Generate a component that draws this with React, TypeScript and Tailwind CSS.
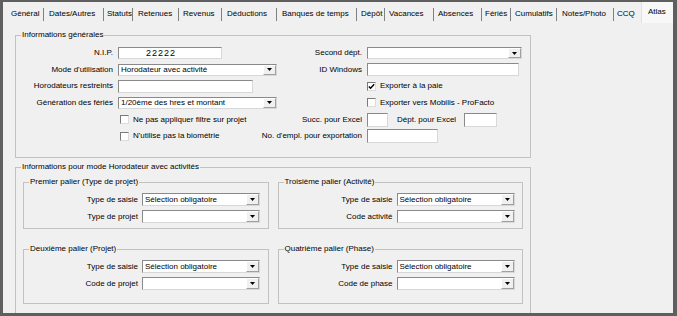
import React from 'react'

const tabs: [string, string][] = [
  ['Général', 'w-[40px] pl-[8px]'],
  ['Dates/Autres', 'w-[59px] pl-[5px]'],
  ['Statuts', 'w-[28px] pl-[3px]'],
  ['Retenues', 'w-[45px] pl-[5px]'],
  ['Revenus', 'w-[42px] pl-[4px]'],
  ['Déductions', 'w-[54px] pl-[5px]'],
  ['Banques de temps', 'w-[79px] pl-[5px]'],
  ['Dépôt', 'w-[27px] pl-[4px]'],
  ['Vacances', 'w-[48px] pl-[4px]'],
  ['Absences', 'w-[47px] pl-[4px]'],
  ['Fériés', 'w-[28px] pl-[3px]'],
  ['Cumulatifs', 'w-[45px] pl-[4px]'],
  ['Notes/Photo', 'w-[56px] pl-[5px]'],
]

// libellé aligné à droite, déborde vers la gauche si trop long
function Label({ w, children }: { w: string; children: React.ReactNode }) {
  return (
    <div className={`${w} shrink-0 flex justify-end`}>
      <span className="leading-[10px] whitespace-nowrap">{children}</span>
    </div>
  )
}

function Input({ w, h = 'h-[12px]', value, extra = '' }: { w: string; h?: string; value?: string; extra?: string }) {
  return (
    <div className={`${w} ${h} bg-white border border-t-[#8a8a8a] border-l-[#8a8a8a] border-r-[#d8d8d8] border-b-[#d8d8d8] flex items-center leading-[10px] ${extra}`}>
      {value}
    </div>
  )
}

function Combo({ w, h = 'h-[12px]', value }: { w: string; h?: string; value?: string }) {
  return (
    <div className={`${w} ${h} bg-white border border-t-[#8a8a8a] border-l-[#8a8a8a] border-r-[#d8d8d8] border-b-[#d8d8d8] flex items-stretch`}>
      <div className="flex-1 flex items-center pl-[2px] leading-[10px] whitespace-nowrap overflow-hidden">{value}</div>
      <div className="w-[13px] bg-[#f0f0f0] border border-t-white border-l-white border-r-[#a0a0a0] border-b-[#a0a0a0] flex items-center justify-center">
        <svg width="5" height="3" viewBox="0 0 5 3">
          <polygon points="0,0 5,0 2.5,3" fill="#000" />
        </svg>
      </div>
    </div>
  )
}

function Check({ checked, label }: { checked?: boolean; label: string }) {
  return (
    <div className="flex items-center">
      <div className="w-[9px] h-[9px] bg-white border border-t-[#7a7a7a] border-l-[#7a7a7a] border-r-[#dcdcdc] border-b-[#dcdcdc] flex items-center justify-center">
        {checked && (
          <svg width="7" height="7" viewBox="0 0 7 7">
            <path d="M0.8 3.4 L2.6 5.3 L6.2 1.2" stroke="#000" strokeWidth="1.4" fill="none" />
          </svg>
        )}
      </div>
      <span className="ml-[4px] leading-[10px] whitespace-nowrap">{label}</span>
    </div>
  )
}

function Group({ title, className, children }: { title: string; className: string; children?: React.ReactNode }) {
  return (
    <div className={`relative border border-[#c2c2c2] ${className}`}>
      <span className="absolute left-[5px] -top-[6px] px-[1px] bg-[#f0f0f0] leading-[10px] whitespace-nowrap">{title}</span>
      {children}
    </div>
  )
}

function Palier({ title, rows, className }: { title: string; rows: [string, string][]; className: string }) {
  return (
    <Group title={title} className={`pt-[10px] flex flex-col gap-[4px] ${className}`}>
      {rows.map(([label, value]) => (
        <div key={label} className="flex items-center">
          <Label w="w-[114px]">{label}</Label>
          <div className="ml-[4px]">
            <Combo w="w-[118px]" h="h-[13px]" value={value} />
          </div>
        </div>
      ))}
    </Group>
  )
}

export default function App() {
  return (
    <div
      className="w-[677px] h-[316px] bg-[#f0f0f0] border-[#5f5f5f] border-t-2 border-l-[3px] border-r-4 border-b-[3px] overflow-hidden text-[8px] text-black flex flex-col"
      style={{ fontFamily: '"Liberation Sans", Arial, sans-serif' }}
    >
      {/* onglets */}
      <div className="flex items-center h-[21px] pt-[3px] shrink-0">
        {tabs.map(([t, cls]) => (
          <React.Fragment key={t}>
            <div className={`${cls} whitespace-nowrap leading-[10px]`}>{t}</div>
            <div className="w-px h-[13px] bg-[#808080]" />
          </React.Fragment>
        ))}
        <div className="w-[27px] pl-[3px] whitespace-nowrap leading-[10px]">CCQ</div>
        <div className="flex-1 self-stretch -mt-[3px] bg-[#f8f8f8] border-l border-[#e2e2e2] flex items-center pl-[6px] pb-[2px] leading-[10px]">Atlas</div>
      </div>

      <div className="pl-[12px] pt-[12px]">
        <Group title="Informations générales" className="w-[516px] h-[123px] flex">
          {/* colonne gauche */}
          <div className="w-[264px] pt-[9px] flex flex-col">
            <div className="h-[16px] flex items-center">
              <Label w="w-[97px]">N.I.P.</Label>
              <div className="ml-[5px]">
                <Input w="w-[104px]" value="22222" extra="pl-[27px] text-[9px] tracking-[1px]" />
              </div>
            </div>
            <div className="h-[17px] flex items-center">
              <Label w="w-[97px]">Mode d'utilisation</Label>
              <div className="ml-[5px]">
                <Combo w="w-[159px]" value="Horodateur avec activité" />
              </div>
            </div>
            <div className="h-[16px] flex items-center">
              <Label w="w-[97px]">Horodateurs restreints</Label>
              <div className="ml-[5px]">
                <Input w="w-[135px]" h="h-[13px]" />
              </div>
            </div>
            <div className="h-[17px] flex items-center">
              <Label w="w-[97px]">Génération des fériés</Label>
              <div className="ml-[5px]">
                <Combo w="w-[159px]" value="1/20ème des hres et montant" />
              </div>
            </div>
            <div className="h-[17px] flex items-center pl-[104px]">
              <Check label="Ne pas appliquer filtre sur projet" />
            </div>
            <div className="h-[16px] flex items-center pl-[104px]">
              <Check label="N'utilise pas la biométrie" />
            </div>
          </div>

          {/* colonne droite */}
          <div className="flex-1 pt-[9px] flex flex-col">
            <div className="h-[16px] flex items-center">
              <Label w="w-[82px]">Second dépt.</Label>
              <div className="ml-[5px]">
                <Combo w="w-[155px]" value="" />
              </div>
            </div>
            <div className="h-[17px] flex items-center">
              <Label w="w-[82px]">ID Windows</Label>
              <div className="ml-[5px]">
                <Input w="w-[152px]" h="h-[13px]" />
              </div>
            </div>
            <div className="h-[16px] flex items-center pl-[87px]">
              <Check checked label="Exporter à la paie" />
            </div>
            <div className="h-[17px] flex items-center pl-[87px]">
              <Check label="Exporter vers Mobilis - ProFacto" />
            </div>
            <div className="h-[17px] flex items-center">
              <Label w="w-[82px]">Succ. pour Excel</Label>
              <div className="ml-[5px]">
                <Input w="w-[21px]" h="h-[14px]" />
              </div>
              <span className="ml-[9px] w-[62px] leading-[10px] whitespace-nowrap">Dépt. pour Excel</span>
              <div className="ml-[5px]">
                <Input w="w-[33px]" h="h-[14px]" />
              </div>
            </div>
            <div className="h-[16px] flex items-center">
              <Label w="w-[82px]">No. d'empl. pour exportation</Label>
              <div className="ml-[5px]">
                <Input w="w-[71px]" h="h-[14px]" />
              </div>
            </div>
          </div>
        </Group>

        <Group
          title="Informations pour mode Horodateur avec activités"
          className="mt-[9px] w-[516px] h-[170px] px-[7px] pt-[14px] grid grid-cols-2 gap-x-[9px] gap-y-[20px] content-start"
        >
          <Palier
            title="Premier palier (Type de projet)"
            className="h-[47px]"
            rows={[['Type de saisie', 'Sélection obligatoire'], ['Type de projet', '']]}
          />
          <Palier
            title="Troisième palier (Activité)"
            className="h-[47px]"
            rows={[['Type de saisie', 'Sélection obligatoire'], ['Code activité', '']]}
          />
          <Palier
            title="Deuxième palier (Projet)"
            className="h-[55px]"
            rows={[['Type de saisie', 'Sélection obligatoire'], ['Code de projet', '']]}
          />
          <Palier
            title="Quatrième palier (Phase)"
            className="h-[55px]"
            rows={[['Type de saisie', 'Sélection obligatoire'], ['Code de phase', '']]}
          />
        </Group>
      </div>
    </div>
  )
}
